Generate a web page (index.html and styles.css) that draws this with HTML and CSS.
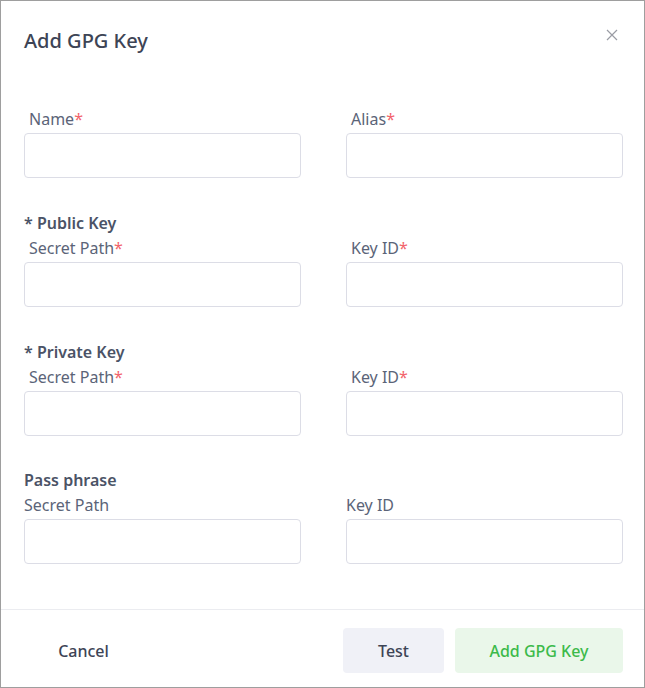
FILE: index.html
```html
<!DOCTYPE html>
<html lang="en">
<head>
<meta charset="utf-8">
<title>Add GPG Key</title>
<link rel="stylesheet" href="styles.css">
</head>
<body>
<div class="dialog">
  <div class="header">
    <h1 class="title">Add GPG Key</h1>
    <button class="close" aria-label="Close">
      <svg width="12" height="12" viewBox="0 0 12 12"><path d="M1 1L11 11M11 1L1 11" stroke="#9a9ca4" stroke-width="1.2" fill="none"/></svg>
    </button>
  </div>
  <div class="body">
    <div class="grid first">
      <div class="field">
        <label class="label indent">Name<span class="req">*</span></label>
        <input class="input" type="text">
      </div>
      <div class="field">
        <label class="label indent">Alias<span class="req">*</span></label>
        <input class="input" type="text">
      </div>
    </div>

    <div class="section">
      <div class="section-title">* Public Key</div>
      <div class="grid">
        <div class="field">
          <label class="label indent">Secret Path<span class="req">*</span></label>
          <input class="input" type="text">
        </div>
        <div class="field">
          <label class="label indent">Key ID<span class="req">*</span></label>
          <input class="input" type="text">
        </div>
      </div>
    </div>

    <div class="section">
      <div class="section-title">* Private Key</div>
      <div class="grid">
        <div class="field">
          <label class="label indent">Secret Path<span class="req">*</span></label>
          <input class="input" type="text">
        </div>
        <div class="field">
          <label class="label indent">Key ID<span class="req">*</span></label>
          <input class="input" type="text">
        </div>
      </div>
    </div>

    <div class="section last">
      <div class="section-title">Pass phrase</div>
      <div class="grid">
        <div class="field">
          <label class="label">Secret Path</label>
          <input class="input" type="text">
        </div>
        <div class="field">
          <label class="label">Key ID</label>
          <input class="input" type="text">
        </div>
      </div>
    </div>
  </div>
  <div class="footer">
    <button class="btn cancel">Cancel</button>
    <div class="actions">
      <button class="btn test">Test</button>
      <button class="btn primary">Add GPG Key</button>
    </div>
  </div>
</div>
</body>
</html>
```
FILE: styles.css
```css
* { box-sizing: border-box; }
html, body { margin: 0; padding: 0; background: #fff; }
body {
  font-family: "Noto Sans", "Open Sans", "DejaVu Sans", sans-serif;
  color: #5b6478;
}
.dialog {
  width: 645px;
  height: 688px;
  border: 1px solid #9e9e9e;
  display: flex;
  flex-direction: column;
  background: #fff;
}
.header {
  display: flex;
  justify-content: space-between;
  align-items: flex-start;
  padding: 22px 23px 0 23px;
}
.title {
  margin: 0;
  font-size: 20px;
  font-weight: 500;
  line-height: 36px;
  color: #3d4455;
}
.close {
  border: 0;
  background: transparent;
  padding: 0;
  margin-top: 4px;
  margin-right: 1px;
  width: 16px;
  height: 16px;
  display: flex;
  align-items: center;
  justify-content: center;
  cursor: pointer;
}
.body {
  flex: 1;
  padding: 49px 21px 0 23px;
}
.grid {
  display: grid;
  grid-template-columns: 277px 277px;
  column-gap: 45px;
}
.field {
  display: flex;
  flex-direction: column;
}
.label {
  font-size: 16px;
  line-height: 22px;
  color: #5b6478;
  margin-bottom: 3px;
}
.label.indent { padding-left: 5px; }
.req { color: #f2646c; }
.input {
  height: 45px;
  border: 1px solid #dcdde6;
  border-radius: 4px;
  background: #fff;
  font: inherit;
  padding: 0 12px;
  outline: none;
}
.section { margin-top: 34px; }
.section.last { margin-top: 33px; }
.section-title {
  font-size: 16px;
  font-weight: 600;
  line-height: 22px;
  color: #4b5366;
  margin-bottom: 3px;
}
.footer {
  border-top: 1px solid #ebecf0;
  display: flex;
  justify-content: space-between;
  align-items: center;
  padding: 18px 21px 14px 23px;
}
.actions {
  display: flex;
  gap: 11px;
}
.btn {
  font-family: inherit;
  font-size: 16px;
  font-weight: 500;
  height: 45px;
  border: 0;
  border-radius: 4px;
  cursor: pointer;
}
.cancel {
  background: transparent;
  color: #3d4455;
  width: 119px;
  padding: 0;
}
.test {
  width: 101px;
  background: #f0f1f7;
  color: #3d4455;
}
.primary {
  width: 168px;
  background: #eaf7ea;
  color: #3cba4a;
}
```
